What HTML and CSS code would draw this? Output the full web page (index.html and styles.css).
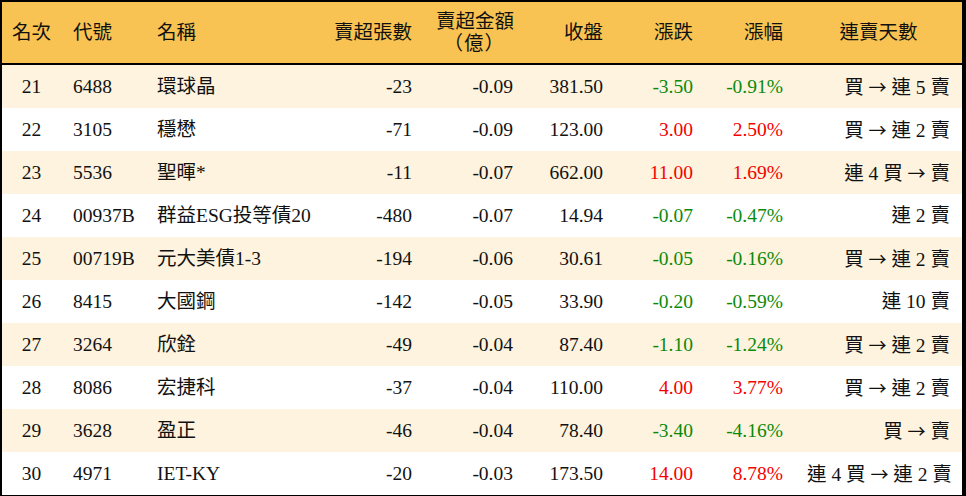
FILE: index.html
```html
<!DOCTYPE html>
<html lang="zh-Hant">
<head>
<meta charset="utf-8">
<title>賣超排行</title>
<link rel="stylesheet" href="styles.css">
</head>
<body>
<div class="frame">
<table class="rank">
<colgroup>
<col class="c-rank"><col class="c-code"><col class="c-name"><col class="c-vol"><col class="c-amt"><col class="c-close"><col class="c-chg"><col class="c-pct"><col class="c-days">
</colgroup>
<thead>
<tr>
<th class="ctr">名次</th>
<th class="lft">代號</th>
<th class="lft">名稱</th>
<th class="rgt">賣超張數</th>
<th class="rgt two">賣超金額<br><span class="unit">（億）</span></th>
<th class="rgt">收盤</th>
<th class="rgt">漲跌</th>
<th class="rgt">漲幅</th>
<th class="ctr">連賣天數</th>
</tr>
</thead>
<tbody>
<tr class="alt"><td class="ctr">21</td><td>6488</td><td>環球晶</td><td class="rgt">-23</td><td class="rgt">-0.09</td><td class="rgt">381.50</td><td class="rgt dn">-3.50</td><td class="rgt dn">-0.91%</td><td class="rgt">買 <span class="arr">→</span> 連 5 賣</td></tr>
<tr><td class="ctr">22</td><td>3105</td><td>穩懋</td><td class="rgt">-71</td><td class="rgt">-0.09</td><td class="rgt">123.00</td><td class="rgt up">3.00</td><td class="rgt up">2.50%</td><td class="rgt">買 <span class="arr">→</span> 連 2 賣</td></tr>
<tr class="alt"><td class="ctr">23</td><td>5536</td><td>聖暉*</td><td class="rgt">-11</td><td class="rgt">-0.07</td><td class="rgt">662.00</td><td class="rgt up">11.00</td><td class="rgt up">1.69%</td><td class="rgt">連 4 買 <span class="arr">→</span> 賣</td></tr>
<tr><td class="ctr">24</td><td>00937B</td><td>群益ESG投等債20</td><td class="rgt">-480</td><td class="rgt">-0.07</td><td class="rgt">14.94</td><td class="rgt dn">-0.07</td><td class="rgt dn">-0.47%</td><td class="rgt">連 2 賣</td></tr>
<tr class="alt"><td class="ctr">25</td><td>00719B</td><td>元大美債1-3</td><td class="rgt">-194</td><td class="rgt">-0.06</td><td class="rgt">30.61</td><td class="rgt dn">-0.05</td><td class="rgt dn">-0.16%</td><td class="rgt">買 <span class="arr">→</span> 連 2 賣</td></tr>
<tr><td class="ctr">26</td><td>8415</td><td>大國鋼</td><td class="rgt">-142</td><td class="rgt">-0.05</td><td class="rgt">33.90</td><td class="rgt dn">-0.20</td><td class="rgt dn">-0.59%</td><td class="rgt">連 10 賣</td></tr>
<tr class="alt"><td class="ctr">27</td><td>3264</td><td>欣銓</td><td class="rgt">-49</td><td class="rgt">-0.04</td><td class="rgt">87.40</td><td class="rgt dn">-1.10</td><td class="rgt dn">-1.24%</td><td class="rgt">買 <span class="arr">→</span> 連 2 賣</td></tr>
<tr><td class="ctr">28</td><td>8086</td><td>宏捷科</td><td class="rgt">-37</td><td class="rgt">-0.04</td><td class="rgt">110.00</td><td class="rgt up">4.00</td><td class="rgt up">3.77%</td><td class="rgt">買 <span class="arr">→</span> 連 2 賣</td></tr>
<tr class="alt"><td class="ctr">29</td><td>3628</td><td>盈正</td><td class="rgt">-46</td><td class="rgt">-0.04</td><td class="rgt">78.40</td><td class="rgt dn">-3.40</td><td class="rgt dn">-4.16%</td><td class="rgt">買 <span class="arr">→</span> 賣</td></tr>
<tr><td class="ctr">30</td><td>4971</td><td>IET-KY</td><td class="rgt">-20</td><td class="rgt">-0.03</td><td class="rgt">173.50</td><td class="rgt up">14.00</td><td class="rgt up">8.78%</td><td class="rgt">連 4 買 <span class="arr">→</span> 連 2 賣</td></tr>
</tbody>
</table>
</div>
</body>
</html>
```

FILE: styles.css
```css
html, body {
  margin: 0;
  padding: 0;
  background: #000;
}

.frame {
  width: 960px;
  border-style: solid;
  border-color: #000;
  border-width: 2px 4px 2px 2px;
  background: #fff;
}

.rank {
  width: 960px;
  table-layout: fixed;
  border-collapse: collapse;
  border-spacing: 0;
  font-family: "Liberation Serif", "Noto Sans CJK TC", serif;
  font-size: 19.5px;
  color: #111;
}

.c-rank { width: 59px; }
.c-code { width: 84px; }
.c-name { width: 175px; }
.c-vol { width: 104px; }
.c-amt { width: 101px; }
.c-close { width: 90px; }
.c-chg { width: 90px; }
.c-pct { width: 90px; }
.c-days { width: 167px; }

.rank th {
  height: 60px;
  padding: 0 12px;
  background: #f8c352;
  font-weight: 400;
  line-height: 22px;
  vertical-align: middle;
  border-bottom: 2px solid #000;
  white-space: nowrap;
}

.rank th.two {
  padding-top: 1px;
}

.rank th .unit {
  display: inline-block;
  padding-right: 8px;
  letter-spacing: 1px;
}

.rank td {
  height: 43px;
  padding: 0 12px;
  line-height: 22px;
  vertical-align: middle;
  white-space: nowrap;
  text-align: left;
}

.rank tr.alt td {
  background: #fdf3de;
}

.rank .ctr { text-align: center; padding: 0; }
.rank .lft { text-align: left; }
.rank .rgt { text-align: right; }

.rank .up { color: #f40000; }
.rank .dn { color: #0a8a0a; }

.arr {
  font-family: "Noto Sans CJK TC", sans-serif;
  font-size: 18px;
}
```
